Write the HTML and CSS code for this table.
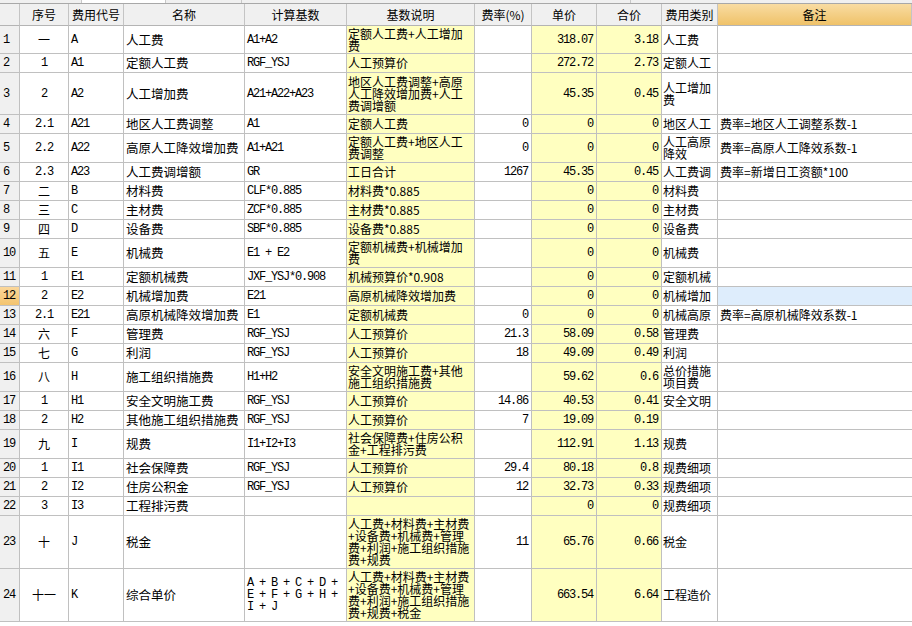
FILE: index.html
```html
<!DOCTYPE html>
<html lang="zh-CN">
<head>
<meta charset="utf-8">
<title>费用表</title>
<link rel="stylesheet" href="styles.css">
</head>
<body>
<div class="sheet">
  <div class="topstrip"><span class="ts ts-a"></span><span class="ts ts-b"></span><span class="ts ts-c"></span><span class="ts ts-d"></span></div>
  <div class="row head">
    <div class="c idx"></div><div class="c hc">序号</div><div class="c hc">费用代号</div><div class="c hc">名称</div><div class="c hc">计算基数</div><div class="c hc">基数说明</div><div class="c hc">费率(%)</div><div class="c hc">单价</div><div class="c hc">合价</div><div class="c hc">费用类别</div><div class="c hc hsel">备注</div>
  </div>

  <div class="row h28">
    <div class="c idx mono">1</div><div class="c no">一</div><div class="c code mono">A</div><div class="c name">人工费</div><div class="c base mono">A1+A2</div><div class="c desc">定额人工费+人工增加<br>费</div><div class="c rate mono"></div><div class="c price mono">318.07</div><div class="c price mono">3.18</div><div class="c type">人工费</div><div class="c note"></div>
  </div>
  <div class="row h19">
    <div class="c idx mono">2</div><div class="c no mono">1</div><div class="c code mono">A1</div><div class="c name">定额人工费</div><div class="c base mono">RGF_YSJ</div><div class="c desc">人工预算价</div><div class="c rate mono"></div><div class="c price mono">272.72</div><div class="c price mono">2.73</div><div class="c type">定额人工</div><div class="c note"></div>
  </div>
  <div class="row h42">
    <div class="c idx mono">3</div><div class="c no mono">2</div><div class="c code mono">A2</div><div class="c name">人工增加费</div><div class="c base mono">A21+A22+A23</div><div class="c desc">地区人工费调整+高原<br>人工降效增加费+人工<br>费调增额</div><div class="c rate mono"></div><div class="c price mono">45.35</div><div class="c price mono">0.45</div><div class="c type">人工增加<br>费</div><div class="c note"></div>
  </div>
  <div class="row h19">
    <div class="c idx mono">4</div><div class="c no mono">2.1</div><div class="c code mono">A21</div><div class="c name">地区人工费调整</div><div class="c base mono">A1</div><div class="c desc">定额人工费</div><div class="c rate mono">0</div><div class="c price mono">0</div><div class="c price mono">0</div><div class="c type">地区人工</div><div class="c note">费率=地区人工调整系数-1</div>
  </div>
  <div class="row h29">
    <div class="c idx mono">5</div><div class="c no mono">2.2</div><div class="c code mono">A22</div><div class="c name">高原人工降效增加费</div><div class="c base mono">A1+A21</div><div class="c desc">定额人工费+地区人工<br>费调整</div><div class="c rate mono">0</div><div class="c price mono">0</div><div class="c price mono">0</div><div class="c type">人工高原<br>降效</div><div class="c note">费率=高原人工降效系数-1</div>
  </div>
  <div class="row h19">
    <div class="c idx mono">6</div><div class="c no mono">2.3</div><div class="c code mono">A23</div><div class="c name">人工费调增额</div><div class="c base mono">GR</div><div class="c desc">工日合计</div><div class="c rate mono">1267</div><div class="c price mono">45.35</div><div class="c price mono">0.45</div><div class="c type">人工费调</div><div class="c note">费率=新增日工资额*100</div>
  </div>
  <div class="row h19">
    <div class="c idx mono">7</div><div class="c no">二</div><div class="c code mono">B</div><div class="c name">材料费</div><div class="c base mono">CLF*0.885</div><div class="c desc">材料费*0.885</div><div class="c rate mono"></div><div class="c price mono">0</div><div class="c price mono">0</div><div class="c type">材料费</div><div class="c note"></div>
  </div>
  <div class="row h19">
    <div class="c idx mono">8</div><div class="c no">三</div><div class="c code mono">C</div><div class="c name">主材费</div><div class="c base mono">ZCF*0.885</div><div class="c desc">主材费*0.885</div><div class="c rate mono"></div><div class="c price mono">0</div><div class="c price mono">0</div><div class="c type">主材费</div><div class="c note"></div>
  </div>
  <div class="row h19">
    <div class="c idx mono">9</div><div class="c no">四</div><div class="c code mono">D</div><div class="c name">设备费</div><div class="c base mono">SBF*0.885</div><div class="c desc">设备费*0.885</div><div class="c rate mono"></div><div class="c price mono">0</div><div class="c price mono">0</div><div class="c type">设备费</div><div class="c note"></div>
  </div>
  <div class="row h29">
    <div class="c idx mono">10</div><div class="c no">五</div><div class="c code mono">E</div><div class="c name">机械费</div><div class="c base mono">E1 + E2</div><div class="c desc">定额机械费+机械增加<br>费</div><div class="c rate mono"></div><div class="c price mono">0</div><div class="c price mono">0</div><div class="c type">机械费</div><div class="c note"></div>
  </div>
  <div class="row h19">
    <div class="c idx mono">11</div><div class="c no mono">1</div><div class="c code mono">E1</div><div class="c name">定额机械费</div><div class="c base mono">JXF_YSJ*0.908</div><div class="c desc">机械预算价*0.908</div><div class="c rate mono"></div><div class="c price mono">0</div><div class="c price mono">0</div><div class="c type">定额机械</div><div class="c note"></div>
  </div>
  <div class="row h19">
    <div class="c idx idx-sel mono">12</div><div class="c no mono">2</div><div class="c code mono">E2</div><div class="c name">机械增加费</div><div class="c base mono">E21</div><div class="c desc">高原机械降效增加费</div><div class="c rate mono"></div><div class="c price mono">0</div><div class="c price mono">0</div><div class="c type">机械增加</div><div class="c note note-sel"></div>
  </div>
  <div class="row h19">
    <div class="c idx mono">13</div><div class="c no mono">2.1</div><div class="c code mono">E21</div><div class="c name">高原机械降效增加费</div><div class="c base mono">E1</div><div class="c desc">定额机械费</div><div class="c rate mono">0</div><div class="c price mono">0</div><div class="c price mono">0</div><div class="c type">机械高原</div><div class="c note">费率=高原机械降效系数-1</div>
  </div>
  <div class="row h19">
    <div class="c idx mono">14</div><div class="c no">六</div><div class="c code mono">F</div><div class="c name">管理费</div><div class="c base mono">RGF_YSJ</div><div class="c desc">人工预算价</div><div class="c rate mono">21.3</div><div class="c price mono">58.09</div><div class="c price mono">0.58</div><div class="c type">管理费</div><div class="c note"></div>
  </div>
  <div class="row h19">
    <div class="c idx mono">15</div><div class="c no">七</div><div class="c code mono">G</div><div class="c name">利润</div><div class="c base mono">RGF_YSJ</div><div class="c desc">人工预算价</div><div class="c rate mono">18</div><div class="c price mono">49.09</div><div class="c price mono">0.49</div><div class="c type">利润</div><div class="c note"></div>
  </div>
  <div class="row h29">
    <div class="c idx mono">16</div><div class="c no">八</div><div class="c code mono">H</div><div class="c name">施工组织措施费</div><div class="c base mono">H1+H2</div><div class="c desc">安全文明施工费+其他<br>施工组织措施费</div><div class="c rate mono"></div><div class="c price mono">59.62</div><div class="c price mono">0.6</div><div class="c type">总价措施<br>项目费</div><div class="c note"></div>
  </div>
  <div class="row h19">
    <div class="c idx mono">17</div><div class="c no mono">1</div><div class="c code mono">H1</div><div class="c name">安全文明施工费</div><div class="c base mono">RGF_YSJ</div><div class="c desc">人工预算价</div><div class="c rate mono">14.86</div><div class="c price mono">40.53</div><div class="c price mono">0.41</div><div class="c type">安全文明</div><div class="c note"></div>
  </div>
  <div class="row h19">
    <div class="c idx mono">18</div><div class="c no mono">2</div><div class="c code mono">H2</div><div class="c name">其他施工组织措施费</div><div class="c base mono">RGF_YSJ</div><div class="c desc">人工预算价</div><div class="c rate mono">7</div><div class="c price mono">19.09</div><div class="c price mono">0.19</div><div class="c type"></div><div class="c note"></div>
  </div>
  <div class="row h29">
    <div class="c idx mono">19</div><div class="c no">九</div><div class="c code mono">I</div><div class="c name">规费</div><div class="c base mono">I1+I2+I3</div><div class="c desc">社会保障费+住房公积<br>金+工程排污费</div><div class="c rate mono"></div><div class="c price mono">112.91</div><div class="c price mono">1.13</div><div class="c type">规费</div><div class="c note"></div>
  </div>
  <div class="row h19">
    <div class="c idx mono">20</div><div class="c no mono">1</div><div class="c code mono">I1</div><div class="c name">社会保障费</div><div class="c base mono">RGF_YSJ</div><div class="c desc">人工预算价</div><div class="c rate mono">29.4</div><div class="c price mono">80.18</div><div class="c price mono">0.8</div><div class="c type">规费细项</div><div class="c note"></div>
  </div>
  <div class="row h19">
    <div class="c idx mono">21</div><div class="c no mono">2</div><div class="c code mono">I2</div><div class="c name">住房公积金</div><div class="c base mono">RGF_YSJ</div><div class="c desc">人工预算价</div><div class="c rate mono">12</div><div class="c price mono">32.73</div><div class="c price mono">0.33</div><div class="c type">规费细项</div><div class="c note"></div>
  </div>
  <div class="row h19">
    <div class="c idx mono">22</div><div class="c no mono">3</div><div class="c code mono">I3</div><div class="c name">工程排污费</div><div class="c base mono"></div><div class="c desc"></div><div class="c rate mono"></div><div class="c price mono">0</div><div class="c price mono">0</div><div class="c type">规费细项</div><div class="c note"></div>
  </div>
  <div class="row h53">
    <div class="c idx mono">23</div><div class="c no">十</div><div class="c code mono">J</div><div class="c name">税金</div><div class="c base mono"></div><div class="c desc">人工费+材料费+主材费<br>+设备费+机械费+管理<br>费+利润+施工组织措施<br>费+规费</div><div class="c rate mono">11</div><div class="c price mono">65.76</div><div class="c price mono">0.66</div><div class="c type">税金</div><div class="c note"></div>
  </div>
  <div class="row h53">
    <div class="c idx mono">24</div><div class="c no">十一</div><div class="c code mono">K</div><div class="c name">综合单价</div><div class="c base mono">A + B + C + D +<br>E + F + G + H +<br>I + J</div><div class="c desc">人工费+材料费+主材费<br>+设备费+机械费+管理<br>费+利润+施工组织措施<br>费+规费+税金</div><div class="c rate mono"></div><div class="c price mono">663.54</div><div class="c price mono">6.64</div><div class="c type">工程造价</div><div class="c note"></div>
  </div>
</div>
</body>
</html>
```

FILE: styles.css
```css
html, body {
  margin: 0;
  padding: 0;
  background: #ffffff;
}

body {
  font-family: "Noto Sans CJK SC", "Noto Sans", sans-serif;
  font-size: 12px;
  color: #000;
  width: 912px;
  height: 626px;
  overflow: hidden;
}

.sheet {
  display: flex;
  flex-direction: column;
}

.topstrip {
  height: 3px;
  background: #f0f0f0;
  border-bottom: 1px solid #a8a8a8;
  display: flex;
}

.ts {
  height: 3px;
  border-right: 1px solid #c8c8c8;
}

.ts-a { width: 81px; }
.ts-b { width: 83px; background: #ffffff; }
.ts-c { width: 75px; }
.ts-d { width: 388px; }

.row {
  display: grid;
  grid-template-columns: 20px 49px 55px 121px 102px 128px 57px 65px 65px 56px 1fr;
}

.head { height: 22px; }
.h19 { height: 19px; }
.h28 { height: 28px; }
.h29 { height: 29px; }
.h42 { height: 42px; }
.h53 { height: 53px; }

.c {
  box-sizing: border-box;
  border-right: 1px solid #c0c0c0;
  border-bottom: 1px solid #c0c0c0;
  display: flex;
  align-items: center;
  overflow: hidden;
  white-space: nowrap;
  line-height: 12px;
  min-width: 0;
}

.mono {
  font-family: "Liberation Mono", monospace;
  font-size: 12px;
  letter-spacing: -1.2px;
}

.head .c {
  background: #f0f0f0;
  justify-content: center;
  border-right-color: #c4c4c4;
  border-bottom-color: #b4b4b4;
}

.head .hsel {
  background: linear-gradient(#f9dca2, #efc269);
}

.idx {
  background: #f0f0f0;
  padding-left: 3px;
}

.idx-sel {
  background: linear-gradient(#fbd79a, #f3c46f);
}

.no {
  justify-content: center;
}

.code {
  padding-left: 2px;
}

.name {
  padding-left: 2px;
  font-size: 12.5px;
}

.base {
  padding-left: 2px;
}

.desc {
  background: #ffffc0;
  padding-left: 1px;
}

.rate {
  justify-content: flex-end;
  padding-right: 3px;
}

.price {
  background: #ffffc0;
  justify-content: flex-end;
  padding-right: 3px;
}

.type {
  padding-left: 1px;
}

.note {
  padding-left: 2px;
  border-right: none;
}

.note-sel {
  background: #deedfc;
}
```
